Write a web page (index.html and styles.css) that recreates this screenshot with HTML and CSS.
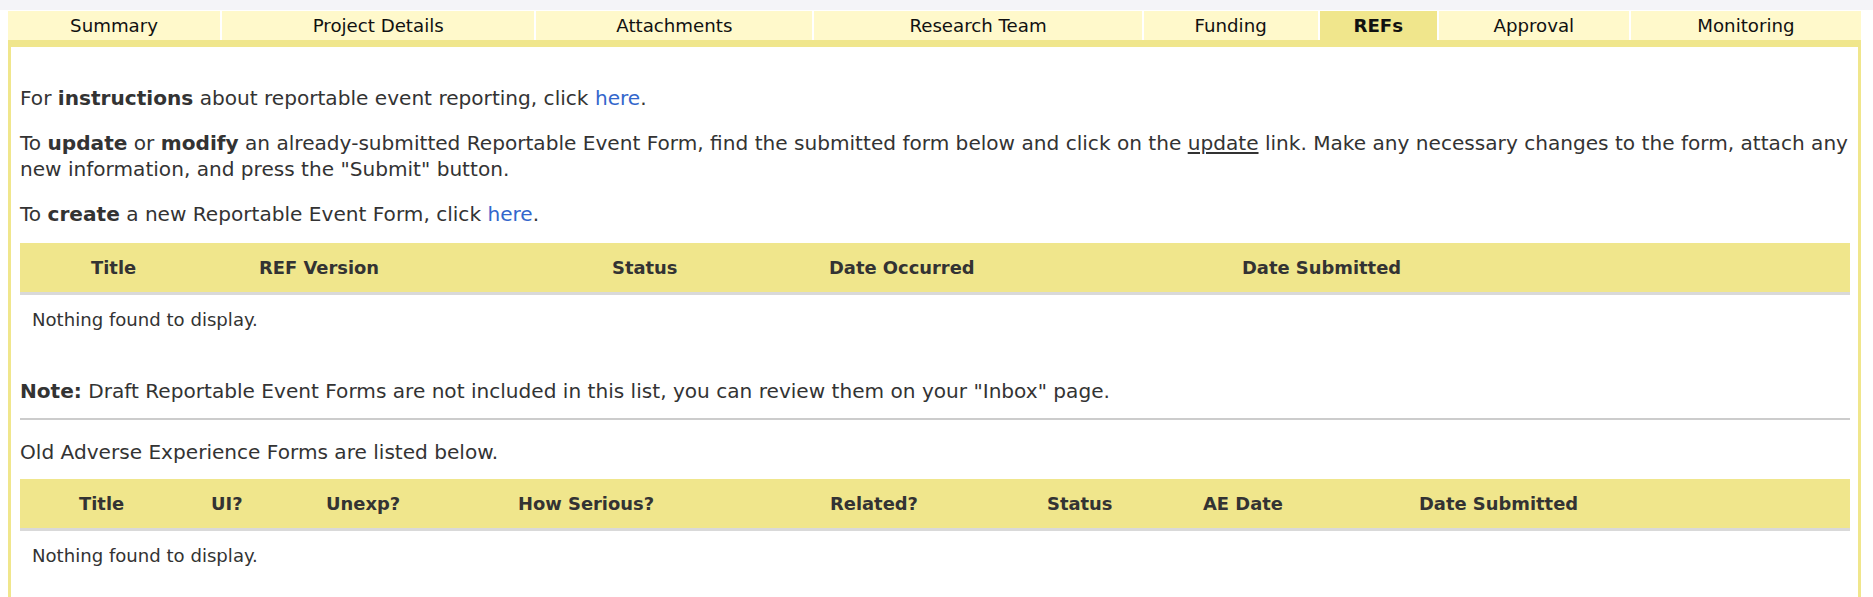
FILE: index.html
```html
<!DOCTYPE html>
<html lang="en">
<head>
    <meta charset="UTF-8">
    <title>REFs</title>
    <link rel="stylesheet" href="styles.css">
</head>
<body>
    <div class="topbar"></div>
    <div class="page">
        <div class="tabs">
            <a class="tab" href="#">Summary</a>
            <a class="tab" href="#">Project Details</a>
            <a class="tab" href="#">Attachments</a>
            <a class="tab" href="#">Research Team</a>
            <a class="tab" href="#">Funding</a>
            <a class="tab active" href="#">REFs</a>
            <a class="tab" href="#">Approval</a>
            <a class="tab" href="#">Monitoring</a>
        </div>
        <div class="content">
            <p>For <b>instructions</b> about reportable event reporting, click <a class="link" href="#">here</a>.</p>
            <p>To <b>update</b> or <b>modify</b> an already-submitted Reportable Event Form, find the submitted form below and click on the <span class="plain-link">update</span> link. Make any necessary changes to the form, attach any new information, and press the "Submit" button.</p>
            <p class="last">To <b>create</b> a new Reportable Event Form, click <a class="link" href="#">here</a>.</p>

            <div class="list">
                <div class="list-head ref-cols">
                    <div>Title</div>
                    <div>REF Version</div>
                    <div>Status</div>
                    <div>Date Occurred</div>
                    <div>Date Submitted</div>
                </div>
                <div class="empty">Nothing found to display.</div>
            </div>

            <p class="note"><b>Note:</b> Draft Reportable Event Forms are not included in this list, you can review them on your "Inbox" page.</p>
            <hr class="divider">
            <p class="old">Old Adverse Experience Forms are listed below.</p>

            <div class="list">
                <div class="list-head ae-cols">
                    <div>Title</div>
                    <div>UI?</div>
                    <div>Unexp?</div>
                    <div>How Serious?</div>
                    <div>Related?</div>
                    <div>Status</div>
                    <div>AE Date</div>
                    <div>Date Submitted</div>
                </div>
                <div class="empty">Nothing found to display.</div>
            </div>
        </div>
    </div>
</body>
</html>
```

FILE: styles.css
```css
* {
    box-sizing: border-box;
}

body {
    margin: 0;
    background: #fff;
    color: #333;
    font-family: 'DejaVu Sans', Verdana, sans-serif;
}

.topbar {
    height: 10px;
    background: #f4f4f8;
}

.page {
    padding: 1px 12px 0 8px;
}

.tabs {
    display: grid;
    grid-template-columns: 212fr 312fr 276fr 327fr 174fr 117fr 190fr 230fr;
    column-gap: 2px;
    height: 29px;
}

.tab {
    display: flex;
    align-items: center;
    justify-content: center;
    background: #fff9cb;
    color: #111;
    font-size: 18.2px;
    text-decoration: none;
}

.tab.active {
    background: #f0e68c;
    font-weight: bold;
}

.content {
    border: 3px solid #f0e68c;
    border-top-width: 7px;
    border-bottom: 0;
    padding: 38px 8px 40px 9px;
    min-height: 560px;
}

.content p {
    margin: 0 0 19px;
    font-size: 20.1px;
    line-height: 26px;
}

.content p.last {
    margin-bottom: 16px;
}

.link {
    color: #3366cc;
    text-decoration: none;
}

.plain-link {
    text-decoration: underline;
}

.list-head {
    display: grid;
    align-items: center;
    height: 52px;
    background: #f0e68c;
    border-bottom: 3px solid #d9d9d9;
    font-size: 17.9px;
    font-weight: bold;
    color: #333;
}

.list-head div {
    padding-left: 12px;
}

.ref-cols {
    grid-template-columns: 227px 353px 217px 413px 1fr;
}

.ref-cols div:first-child {
    padding-left: 71px;
}

.ae-cols {
    grid-template-columns: 179px 115px 192px 312px 217px 156px 216px 1fr;
}

.ae-cols div:first-child {
    padding-left: 59px;
}

.empty {
    padding: 14px 12px 10px;
    font-size: 18.1px;
    line-height: 22px;
}

.content p.note {
    margin: 37px 0 0;
}

.divider {
    margin: 14px 0 0;
    border: 0;
    border-top: 2px solid #ccc;
}

.content p.old {
    margin: 19px 0 14px;
}
```
